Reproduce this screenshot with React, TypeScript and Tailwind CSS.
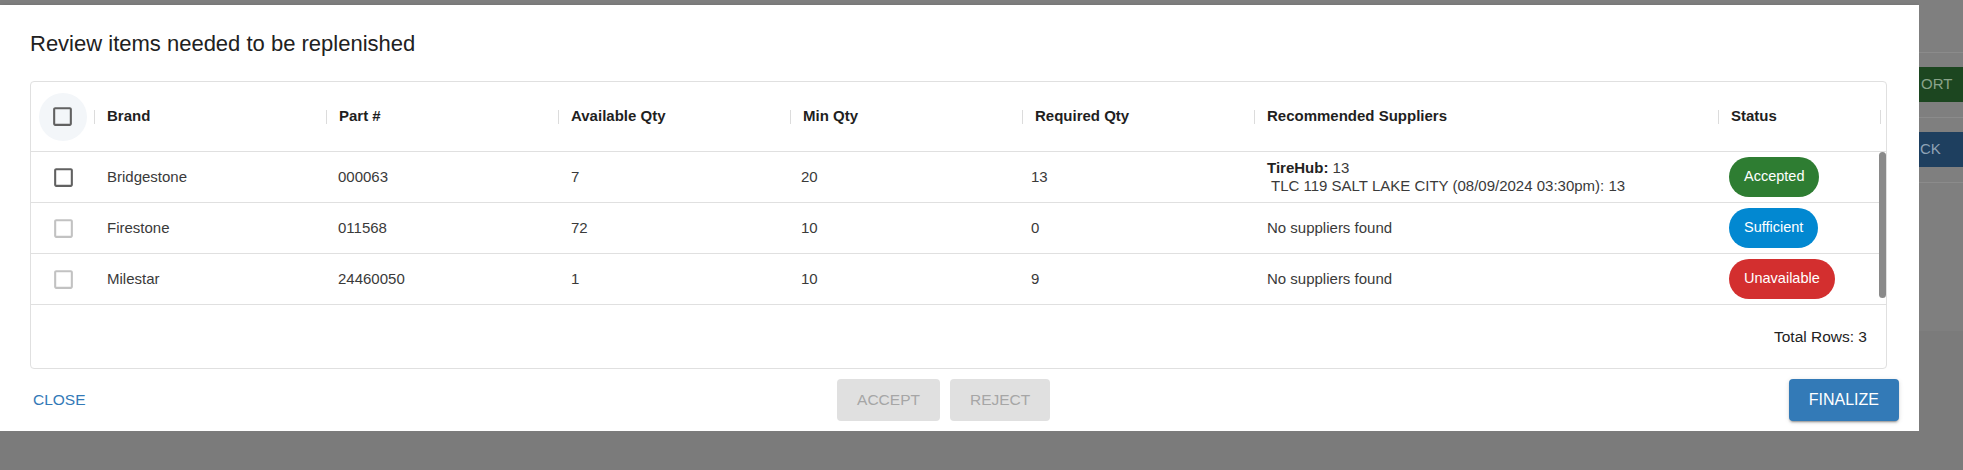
import React from "react";

const FONT = { fontFamily: '"Liberation Sans", Arial, sans-serif' };

const COLS = "grid grid-cols-[64px_232px_232px_232px_232px_232px_464px_162px]";

function CheckBox({ disabled = false }: { disabled?: boolean }) {
  return (
    <svg width="25" height="25" viewBox="0 0 24 24" className="block">
      <path
        fill={disabled ? "#c2c2c2" : "#616161"}
        d="M19 5v14H5V5h14m0-2H5c-1.11 0-2 .9-2 2v14c0 1.1.89 2 2 2h14c1.1 0 2-.9 2-2V5c0-1.1-.9-2-2-2z"
      />
    </svg>
  );
}

function HeaderCell({ label }: { label: string }) {
  return (
    <div className="flex items-center h-full">
      <div className="flex-1 pl-[12px] text-[15px] font-bold text-[#1f1f1f]">{label}</div>
      <div className="w-px h-[14px] bg-[#dcdcdc]" />
    </div>
  );
}

type Row = {
  brand: string;
  part: string;
  avail: string;
  min: string;
  req: string;
  suppliers: React.ReactNode;
  status: { label: string; cls: string };
  disabled: boolean;
};

const rows: Row[] = [
  {
    brand: "Bridgestone",
    part: "000063",
    avail: "7",
    min: "20",
    req: "13",
    suppliers: (
      <div className="flex flex-col leading-[18px]">
        <div>
          <span className="font-bold text-[#222]">TireHub:</span> 13
        </div>
        <div className="pl-[4px]">TLC 119 SALT LAKE CITY (08/09/2024 03:30pm): 13</div>
      </div>
    ),
    status: { label: "Accepted", cls: "bg-[#2e7d32]" },
    disabled: false,
  },
  {
    brand: "Firestone",
    part: "011568",
    avail: "72",
    min: "10",
    req: "0",
    suppliers: "No suppliers found",
    status: { label: "Sufficient", cls: "bg-[#0288d1]" },
    disabled: true,
  },
  {
    brand: "Milestar",
    part: "24460050",
    avail: "1",
    min: "10",
    req: "9",
    suppliers: "No suppliers found",
    status: { label: "Unavailable", cls: "bg-[#d32f2f]" },
    disabled: true,
  },
];

export default function App() {
  return (
    <div style={FONT} className="w-[1963px] h-[470px] bg-[#7b7b7b] flex overflow-hidden">
      {/* left: dialog column */}
      <div className="w-[1919px] flex flex-col">
        <div className="h-[5px] bg-[#7f7f7f]" />
        <div className="h-[426px] bg-white flex flex-col pt-[25px] shadow-[0_2px_6px_rgba(0,0,0,0.25)]">
          <div className="pl-[30px] text-[22px] leading-[28px] text-[#212121]">
            Review items needed to be replenished
          </div>
          <div className="mt-[23px] ml-[30px] mr-[32px] h-[288px] border border-[#e0e0e0] rounded-[4px] flex flex-col text-[15px] text-[#3a3a3a]">
            {/* header */}
            <div className={`${COLS} h-[70px] border-b border-[#e0e0e0] items-center`}>
              <div className="flex items-center h-full">
                <div className="flex-1 flex justify-center">
                  <div className="w-[48px] h-[48px] rounded-full bg-[#f3f6f9] flex items-center justify-center">
                    <CheckBox />
                  </div>
                </div>
                <div className="w-px h-[14px] bg-[#dcdcdc]" />
              </div>
              <HeaderCell label="Brand" />
              <HeaderCell label="Part #" />
              <HeaderCell label="Available Qty" />
              <HeaderCell label="Min Qty" />
              <HeaderCell label="Required Qty" />
              <HeaderCell label="Recommended Suppliers" />
              <HeaderCell label="Status" />
            </div>
            {/* body */}
            <div className="relative">
              {rows.map((r) => (
                <div key={r.brand} className={`${COLS} h-[51px] border-b border-[#e0e0e0] items-center`}>
                  <div className="flex justify-center">
                    <CheckBox disabled={r.disabled} />
                  </div>
                  <div className="pl-[12px]">{r.brand}</div>
                  <div className="pl-[11px]">{r.part}</div>
                  <div className="pl-[12px]">{r.avail}</div>
                  <div className="pl-[10px]">{r.min}</div>
                  <div className="pl-[8px]">{r.req}</div>
                  <div className="pl-[12px]">{r.suppliers}</div>
                  <div className="pl-[10px]">
                    <span
                      className={`inline-flex items-center h-[40px] px-[15px] rounded-full text-white text-[14.5px] ${r.status.cls}`}
                    >
                      {r.status.label}
                    </span>
                  </div>
                </div>
              ))}
              <div className="absolute right-0 top-0 w-[7px] h-[146px] rounded-full bg-[#8a8a8a]" />
            </div>
            {/* footer */}
            <div className="flex-1 flex items-center justify-end pr-[19px] text-[15.5px] text-[#222]">
              Total Rows: 3
            </div>
          </div>
          {/* actions */}
          <div className="flex items-center justify-between px-[20px] pt-[10px]">
            <button className="h-[42px] px-[13px] rounded-[4px] text-[15.5px] text-[#337ab7] uppercase">
              Close
            </button>
            <div className="flex gap-[10px]">
              <button className="h-[42px] px-[20px] rounded-[4px] bg-[#e0e0e0] text-[15.5px] text-[#a6a6a6]">
                ACCEPT
              </button>
              <button className="h-[42px] px-[20px] rounded-[4px] bg-[#e0e0e0] text-[15.5px] text-[#a6a6a6]">
                REJECT
              </button>
            </div>
            <button className="h-[42px] px-[20px] rounded-[4px] bg-[#337ab7] text-[16px] text-white shadow-[0_3px_1px_-2px_rgba(0,0,0,0.2),0_2px_2px_0_rgba(0,0,0,0.14),0_1px_5px_0_rgba(0,0,0,0.12)]">
              FINALIZE
            </button>
          </div>
        </div>
        <div className="flex-1 bg-[#7b7b7b]" />
      </div>
      {/* right: background app visible through overlay */}
      <div className="flex-1 flex flex-col">
        <div className="h-[52px] bg-[#7f7f7f]" />
        <div className="h-px bg-[#8b8b8b]" />
        <div className="h-[14px] bg-[#7f7f7f]" />
        <div className="h-[35px] bg-[#1c4620] flex items-center pl-[2px] text-[15px] text-[#8aa38a]">
          ORT
        </div>
        <div className="h-[15px] bg-[#7f7f7f]" />
        <div className="h-px bg-[#8b8b8b]" />
        <div className="h-[14px] bg-[#7f7f7f]" />
        <div className="h-[35px] bg-[#1e3f5f] flex items-center pl-[1px] text-[15px] text-[#8ea2b6]">
          CK
        </div>
        <div className="h-[15px] bg-[#7f7f7f]" />
        <div className="h-px bg-[#8b8b8b]" />
        <div className="h-[148px] bg-[#7f7f7f]" />
        <div className="flex-1 bg-[#7b7b7b]" />
      </div>
    </div>
  );
}
